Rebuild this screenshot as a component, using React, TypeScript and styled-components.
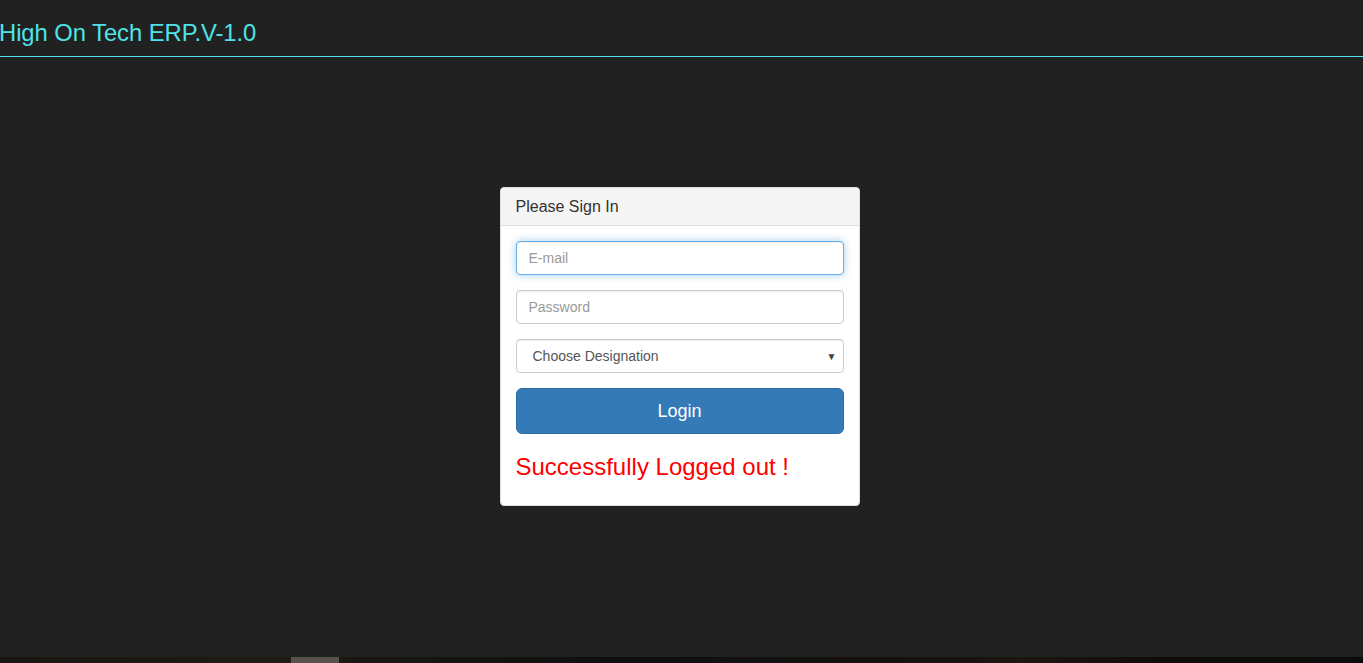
import React from "react";
import styled, { createGlobalStyle } from "styled-components";

const Global = createGlobalStyle`
  html, body { margin: 0; padding: 0; background: #212121; height: 100%; }
  body { font-family: "Liberation Sans", Arial, sans-serif; font-size: 14px; line-height: 1.42857; color: #333; }
  * { box-sizing: border-box; }
`;

const Page = styled.div`
  height: 663px;
  display: flex;
  flex-direction: column;
  background: #212121;
  overflow: hidden;
`;

const Header = styled.header`
  height: 57px;
  border-bottom: 1px solid #4fe3e8;
  display: flex;
  align-items: flex-start;
  padding-top: 17px;
`;

const Brand = styled.h1`
  margin: 0 0 0 -1px;
  font-size: 23.8px;
  font-weight: 400;
  line-height: 32px;
  letter-spacing: -0.05px;
  color: #4fe3e8;
  font-family: "Liberation Sans", Arial, sans-serif;
`;

const Main = styled.main`
  flex: 1;
  display: flex;
  justify-content: center;
  align-items: flex-start;
  padding-top: 130px;
`;

const Panel = styled.div`
  width: 360px;
  background: #fff;
  border: 1px solid #ddd;
  border-radius: 4px;
  transform: translateX(-2px);
`;

const PanelHeading = styled.div`
  background: #f5f5f5;
  border-bottom: 1px solid #ddd;
  border-radius: 3px 3px 0 0;
  padding: 10px 15px;
  height: 38px;
  font-size: 16px;
  line-height: 18px;
  color: #333;
`;

const PanelBody = styled.form`
  padding: 15px 15px 25px;
  display: flex;
  flex-direction: column;
`;

const Field = styled.div`
  margin-bottom: 15px;
  position: relative;
`;

const Input = styled.input<{ $focus?: boolean }>`
  display: block;
  width: 100%;
  height: 34px;
  padding: 6px 12px;
  font-size: 14px;
  font-family: "Liberation Sans", Arial, sans-serif;
  color: #555;
  background: #fff;
  border: 1px solid ${(p) => (p.$focus ? "#66afe9" : "#ccc")};
  border-radius: 4px;
  outline: none;
  box-shadow: ${(p) =>
    p.$focus
      ? "inset 0 1px 1px rgba(0,0,0,.075), 0 0 8px rgba(102,175,233,.6)"
      : "inset 0 1px 1px rgba(0,0,0,.075)"};
  &::placeholder { color: #999; }
`;

const Select = styled.div`
  display: flex;
  align-items: center;
  justify-content: space-between;
  width: 100%;
  height: 34px;
  padding: 2px 6px 0 16px;
  font-size: 14px;
  color: #555;
  background: #fff;
  border: 1px solid #ccc;
  border-radius: 4px;
  box-shadow: inset 0 1px 1px rgba(0,0,0,.075);
`;

const Caret = styled.span`
  font-size: 10px;
  color: #444;
`;

const Button = styled.button`
  display: block;
  width: 100%;
  height: 46px;
  padding: 2px 16px 0;
  font-size: 18px;
  font-family: "Liberation Sans", Arial, sans-serif;
  color: #fff;
  background: #337ab7;
  border: 1px solid #2e6da4;
  border-radius: 6px;
  cursor: pointer;
  line-height: 1.33;
`;

const Message = styled.h3`
  margin: 20px 0 0;
  font-size: 24px;
  font-weight: 400;
  line-height: 26px;
  color: #ff0000;
`;

const BottomStrip = styled.div`
  height: 6px;
  flex-shrink: 0;
  background: linear-gradient(90deg, #1a1712 0%, #1e1a14 20%, #0f0f10 45%, #161210 70%, #1d1711 75%, #100c0c 85%, #0c0a0a 100%);
  display: flex;
  padding-left: 291px;
`;

const StripTab = styled.div`
  width: 48px;
  height: 100%;
  background: #57524c;
`;

export default function App() {
  return (
    <>
      <Global />
      <Page>
        <Header>
          <Brand>High On Tech ERP.V-1.0</Brand>
        </Header>
        <Main>
          <Panel>
            <PanelHeading>Please Sign In</PanelHeading>
            <PanelBody onSubmit={(e) => e.preventDefault()}>
              <Field>
                <Input $focus placeholder="E-mail" type="email" />
              </Field>
              <Field>
                <Input placeholder="Password" type="password" />
              </Field>
              <Field>
                <Select>
                  <span>Choose Designation</span>
                  <Caret>▼</Caret>
                </Select>
              </Field>
              <Button type="submit">Login</Button>
              <Message>Successfully Logged out !</Message>
            </PanelBody>
          </Panel>
        </Main>
        <BottomStrip>
          <StripTab />
        </BottomStrip>
      </Page>
    </>
  );
}
